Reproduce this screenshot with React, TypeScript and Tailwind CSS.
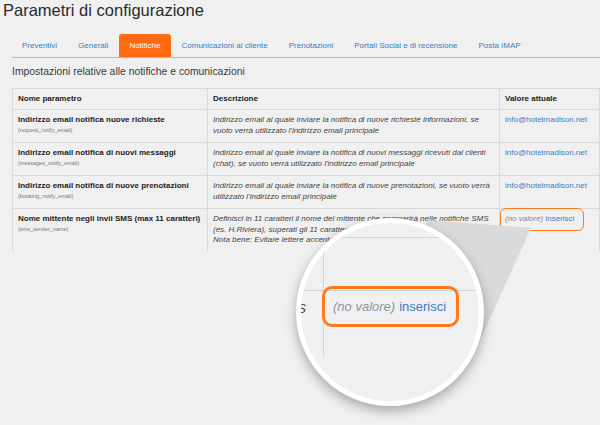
import React from 'react';

type Row = { name: string; key: string; desc: string[]; value?: string };

const rows: Row[] = [
  {
    name: 'Indirizzo email notifica nuove richieste',
    key: '(request_notify_email)',
    desc: [
      'Indirizzo email al quale inviare la notifica di nuove richieste informazioni, se',
      "vuoto verrà utilizzato l'indirizzo email principale",
    ],
    value: 'info@hotelmadison.net',
  },
  {
    name: 'Indirizzo email notifica di nuovi messaggi',
    key: '(messages_notify_email)',
    desc: [
      'Indirizzo email al quale inviare la notifica di nuovi messaggi ricevuti dal clienti',
      "(chat), se vuoto verrà utilizzato l'indirizzo email principale",
    ],
    value: 'info@hotelmadison.net',
  },
  {
    name: 'Indirizzo email notifica di nuove prenotazioni',
    key: '(booking_notify_email)',
    desc: [
      'Indirizzo email al quale inviare la notifica di nuove prenotazioni, se vuoto verrà',
      "utilizzato l'indirizzo email principale",
    ],
    value: 'info@hotelmadison.net',
  },
  {
    name: 'Nome mittente negli invii SMS (max 11 caratteri)',
    key: '(sms_sender_name)',
    desc: [
      'Definisci in 11 caratteri il nome del mittente che comparirà nelle notifiche SMS',
      '(es. H.Riviera), superati gli 11 caratteri verrà troncato',
      'Nota bene: Evitare lettere accentate e caratteri speciali',
    ],
  },
];

const tabs = [
  'Preventivi',
  'Generali',
  'Notifiche',
  'Comunicazioni al cliente',
  'Prenotazioni',
  'Portali Social e di recensione',
  'Posta IMAP',
];

const App: React.FC = () => {
  const cell = 'border border-[#d9d9d9] px-[5px] pt-[5px] pb-[6px] align-top';
  const head = 'h-[21px] border border-[#d9d9d9] px-[5px] text-left align-middle text-[8px] font-bold text-[#222]';

  return (
    <div className="relative w-[600px] h-[425px] overflow-hidden bg-[#f0f0f0] text-[#333] font-['Liberation_Sans',Arial,sans-serif]">
      <h1 className="pl-[3px] pt-[1px] text-[16.5px] leading-[19px] text-[#2b2b2b]">Parametri di configurazione</h1>

      <div className="mt-[14px] ml-[12px] flex gap-[1px] border-b border-[#ffa468]">
        {tabs.map(t => (
          <div
            key={t}
            className={`px-[10px] h-[23px] leading-[23px] text-[8px] rounded-t-[3px] ${t === 'Notifiche' ? 'bg-[#ff6a13] text-white' : 'text-[#3f7cbf]'}`}
          >
            {t}
          </div>
        ))}
      </div>

      <p className="mt-[8px] ml-[12px] text-[10.4px] leading-[12px] text-[#3a3a3a]">Impostazioni relative alle notifiche e comunicazioni</p>

      <table className="mt-[10px] ml-[12px] w-[588px] table-fixed border-collapse">
        <colgroup>
          <col className="w-[195px]" />
          <col className="w-[292px]" />
          <col />
        </colgroup>
        <thead>
          <tr>
            <th className={head}>Nome parametro</th>
            <th className={head}>Descrizione</th>
            <th className={head}>Valore attuale</th>
          </tr>
        </thead>
        <tbody>
          {rows.map((r, i) => {
            const last = i === rows.length - 1;
            return (
              <tr key={r.key}>
                <td className={`${cell} ${last ? 'border-b-0' : ''}`}>
                  <div className="text-[8px] leading-[10.5px] font-bold text-[#222] whitespace-nowrap">{r.name}</div>
                  <div className="text-[5.5px] leading-[8px] text-[#777]">{r.key}</div>
                </td>
                <td className={`${cell} ${last ? 'border-b-0' : ''}`}>
                  <div className="text-[8px] leading-[10.5px] italic text-[#444] whitespace-nowrap">
                    {r.desc.map((d, j) => (
                      <div key={j}>{d}</div>
                    ))}
                  </div>
                </td>
                <td className={`${cell} relative ${last ? 'border-b-0' : ''}`}>
                  {r.value ? (
                    <div className="text-[8px] leading-[10.5px] text-[#3b7dc4]">{r.value}</div>
                  ) : (
                    <>
                      <div className="text-[8px] leading-[10.5px] whitespace-nowrap">
                        <span className="italic text-[#8a8a8a]">(no valore)</span> <span className="text-[#3b7dc4]">inserisci</span>
                      </div>
                      <div className="absolute left-0 top-[-1px] w-[84px] h-[23px] rounded-[6px] border-[1.5px] border-[#ff7a1a]" />
                    </>
                  )}
                </td>
              </tr>
            );
          })}
        </tbody>
      </table>

      {/* cone of the magnifier */}
      <svg className="absolute inset-0 pointer-events-none" width="600" height="425" viewBox="0 0 600 425">
        <polygon points="428,220 531,228 478,345 390,300" fill="#dadada" />
      </svg>

      {/* magnifier */}
      <div className="absolute left-[296px] top-[218px] w-[188px] h-[188px] rounded-full border-[5px] border-white bg-[#f0f0f0] overflow-hidden shadow-[0_5px_12px_rgba(0,0,0,0.3)]">
        <div className="absolute left-0 right-0 top-[14px] h-px bg-[#d6d6d6]" />
        <div className="absolute left-0 right-0 top-[67px] h-px bg-[#d6d6d6]" />
        <div className="absolute left-[22px] top-[14px] h-[120px] w-px bg-[#d6d6d6]" />
        <div className="absolute right-[173px] top-[78px] text-[13px] leading-[16px] italic text-[#444] whitespace-nowrap">notifiche SMS</div>
        <div className="absolute left-[21px] top-[63px] w-[137px] h-[41px] rounded-[10px] border-[3px] border-[#ff7a1a] flex items-center pl-[8px] text-[13px] whitespace-nowrap">
          <span className="italic text-[#8a96a3]">(no valore)</span>
          <span className="ml-[4px] text-[#3b7dc4]">inserisci</span>
        </div>
      </div>
    </div>
  );
};

export default App;
